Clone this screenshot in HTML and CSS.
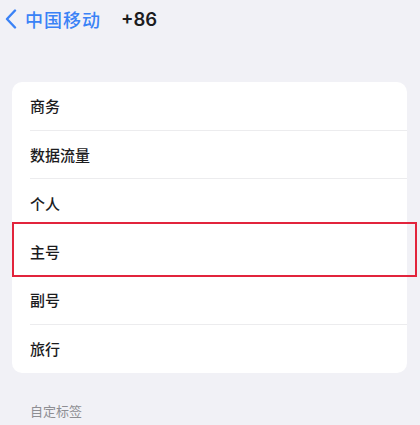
FILE: index.html
```html
<!DOCTYPE html>
<html lang="zh">
<head>
<meta charset="utf-8">
<link rel="stylesheet" href="styles.css">
</head>
<body>
<div class="page">
  <header class="nav">
    <a class="back">
      <svg class="chev" width="12" height="20" viewBox="0 0 12 20"><path d="M10 1.5 L2 10 L10 18.5" fill="none" stroke="#3a82f6" stroke-width="2.4" stroke-linecap="round" stroke-linejoin="round"/></svg>
      <span class="back-text">中国移动</span>
    </a>
    <span class="title">+86</span>
  </header>
  <div class="card">
    <div class="row">商务</div>
    <div class="row">数据流量</div>
    <div class="row noline">个人</div>
    <div class="row selected noline">主号<span class="hl"></span></div>
    <div class="row">副号</div>
    <div class="row noline">旅行</div>
  </div>
  <div class="section-label">自定标签</div>
</div>
</body>
</html>
```
FILE: styles.css
```css
html, body {
  margin: 0;
  padding: 0;
  background: #f1f1f6;
}
body {
  font-family: "Noto Sans CJK SC", "Noto Sans", sans-serif;
  width: 420px;
  height: 425px;
  overflow: hidden;
}
.nav {
  display: flex;
  align-items: center;
  height: 38px;
  padding-left: 5px;
}
.back {
  display: flex;
  align-items: center;
  gap: 8px;
}
.chev {
  display: block;
}
.back-text {
  color: #3a82f6;
  font-size: 18px;
  letter-spacing: 1px;
  font-weight: 500;
}
.title {
  margin-left: 20px;
  font-family: "Inter", "Liberation Sans", sans-serif;
  font-weight: 600;
  font-size: 18.5px;
  color: #1c1c1e;
}
.card {
  margin: 44px 13px 0 12px;
  background: #ffffff;
  border-radius: 10px;
  padding-left: 18px;
}
.row {
  position: relative;
  height: 48.5px;
  display: flex;
  align-items: center;
  font-size: 15px;
  font-weight: 500;
  color: #1c1c1e;
  border-bottom: 1px solid #ececee;
  box-sizing: border-box;
}
.row.noline {
  border-bottom: none;
}
.hl {
  position: absolute;
  left: -18px;
  right: -10px;
  top: -5.5px;
  bottom: -1px;
  border: 2px solid #e2243c;
  pointer-events: none;
}
.section-label {
  margin: 28px 0 0 30px;
  font-size: 13px;
  color: #8e8e93;
}
```
